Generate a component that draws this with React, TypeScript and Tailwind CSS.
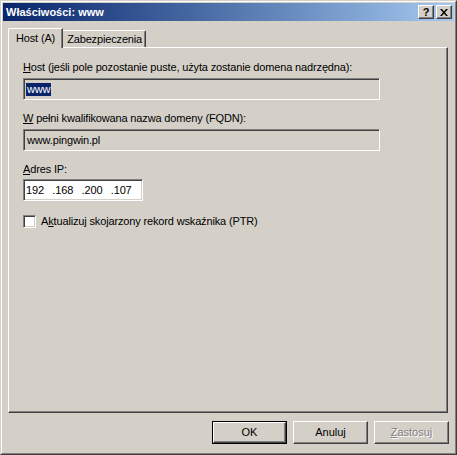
import React from 'react'

const font = { fontFamily: '"Liberation Sans", Arial, sans-serif' }

function Field({ children, white }: { children?: React.ReactNode; white?: boolean }) {
  return (
    <div
      className={
        'h-[22px] border border-t-[#808080] border-l-[#808080] border-b-white border-r-white shadow-[inset_1px_1px_0_#404040,inset_-1px_-1px_0_#d4d0c8] flex items-center px-[2px] ' +
        (white ? 'bg-white' : 'bg-[#d4d0c8]')
      }
    >
      {children}
    </div>
  )
}

function Btn({ label, def, disabled, u }: { label: string; def?: boolean; disabled?: boolean; u?: number }) {
  const text =
    u === undefined ? (
      label
    ) : (
      <>
        {label.slice(0, u)}
        <span className="underline">{label[u]}</span>
        {label.slice(u + 1)}
      </>
    )
  return (
    <div className={'w-[75px] h-[23px] ' + (def ? 'border border-black' : '')}>
      <div className="h-full w-full border border-t-white border-l-white border-b-[#404040] border-r-[#404040] shadow-[inset_-1px_-1px_0_#808080] flex items-center justify-center">
        <span
          className={
            'text-[11px] ' + (disabled ? 'text-[#808080] [text-shadow:1px_1px_0_#fff]' : 'text-black')
          }
        >
          {text}
        </span>
      </div>
    </div>
  )
}

function TitleBtn({ children }: { children: React.ReactNode }) {
  return (
    <div className="w-[16px] h-[14px] bg-[#d4d0c8] border border-t-white border-l-white border-b-[#404040] border-r-[#404040] shadow-[inset_-1px_-1px_0_#808080] flex items-center justify-center">
      {children}
    </div>
  )
}

// ip octets, 4 little boxes
const octets = ['192', '.168', '.200', '.107']

export default function App() {
  return (
    <div style={font} className="w-[457px] h-[455px] bg-[#d4d0c8] text-[11px] leading-[13px] text-black select-none">
      <div className="w-full h-full border border-t-[#d4d0c8] border-l-[#d4d0c8] border-b-[#404040] border-r-[#404040]">
        <div className="w-full h-full border border-t-white border-l-white border-b-[#808080] border-r-[#808080] p-px flex flex-col">
          {/* title bar */}
          <div className="h-[18px] bg-gradient-to-r from-[#0a246a] to-[#a6caf0] flex items-center pl-[3px] pr-[2px]">
            <span className="text-white font-bold text-[11px] flex-1">Właściwości: www</span>
            <div className="flex gap-[2px]">
              <TitleBtn>
                <span className="font-bold text-[11px] leading-none text-black">?</span>
              </TitleBtn>
              <TitleBtn>
                <svg width="8" height="7" viewBox="0 0 8 7">
                  <path d="M0 0h2l2 2.5L6 0h2L5 3.5 8 7H6L4 4.5 2 7H0l3-3.5z" fill="#000" />
                </svg>
              </TitleBtn>
            </div>
          </div>

          {/* body */}
          <div className="flex-1 flex flex-col pl-[5px] pr-[6px] pt-[7px] tracking-[-0.15px]">
            {/* tabs */}
            <div className="flex items-end h-[19px] relative z-10">
              <div className="h-[20px] -mb-px bg-[#d4d0c8] border-t border-l border-white border-r border-r-[#404040] shadow-[inset_-1px_0_0_#808080] rounded-tl-[2px] px-[7px] flex items-start pt-[3px]">
                Host (A)
              </div>
              <div className="h-[17px] border-t border-white border-r border-r-[#404040] shadow-[inset_-1px_0_0_#808080] rounded-tr-[2px] pl-[4px] pr-[3px] flex items-start pt-[2px]">
                Zabezpieczenia
              </div>
            </div>
            <div className="h-[366px] border border-t-white border-l-white border-b-[#404040] border-r-[#404040] shadow-[inset_-1px_-1px_0_#808080] pl-[14px] pt-[13px]">
              <div>
                <span className="underline">H</span>ost (jeśli pole pozostanie puste, użyta zostanie domena nadrzędna):
              </div>
              <div className="w-[357px] mt-[4px]">
                <Field>
                  <span className="bg-[#0a246a] text-white leading-[13px] px-px">www</span>
                </Field>
              </div>
              <div className="mt-[12px]">
                <span className="underline">W</span> pełni kwalifikowana nazwa domeny (FQDN):
              </div>
              <div className="w-[357px] mt-[4px]">
                <Field>
                  <span className="pl-px">www.pingwin.pl</span>
                </Field>
              </div>
              <div className="mt-[12px]">
                <span className="underline">A</span>dres IP:
              </div>
              <div className="w-[120px] mt-[3px]">
                <Field white>
                  {octets.map((o, i) => (
                    <span key={o} className={i === 0 ? 'w-[27px]' : 'w-[30px]'}>
                      {o}
                    </span>
                  ))}
                </Field>
              </div>
              <div className="mt-[14px] flex items-center gap-[5px]">
                <div className="w-[13px] h-[13px] bg-white border border-t-[#808080] border-l-[#808080] border-b-white border-r-white shadow-[inset_1px_1px_0_#404040,inset_-1px_-1px_0_#d4d0c8]" />
                <span>
                  A<span className="underline">k</span>tualizuj skojarzony rekord wskaźnika (PTR)
                </span>
              </div>
            </div>

            {/* buttons */}
            <div className="flex justify-end gap-[6px] mt-[8px] -mr-px tracking-normal">
              <Btn label="OK" def />
              <Btn label="Anuluj" />
              <Btn label="Zastosuj" disabled u={0} />
            </div>
          </div>
        </div>
      </div>
    </div>
  )
}
